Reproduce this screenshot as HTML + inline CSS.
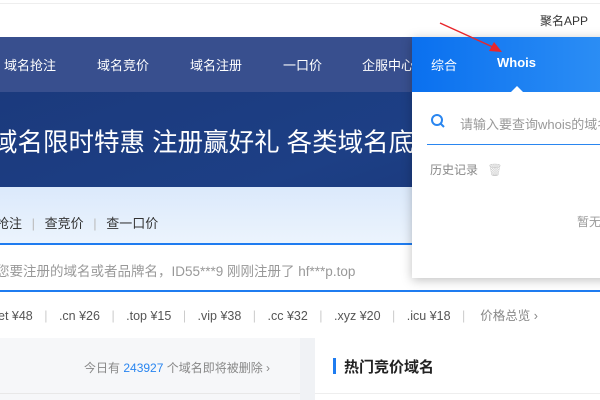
<!DOCTYPE html><html><head><meta charset="utf-8"><style>
*{margin:0;padding:0;box-sizing:border-box}
body{width:600px;height:400px;overflow:hidden;position:relative;background:#fff;font-family:"Liberation Sans","Noto Sans CJK SC",sans-serif;}
.a{position:absolute;white-space:nowrap}
.s{color:#ccc;margin:0 8px}
</style></head><body>
<div class="a" style="left:0;top:3px;width:600px;height:1px;background:#eee"></div>
<div class="a" style="left:540px;top:12px;font-size:12px;color:#333">聚名APP</div>
<div class="a" style="left:0;top:37px;width:600px;height:55px;background:#384f8e"></div>
<div class="a" style="left:4px;top:55px;font-size:13px;color:#fff">域名抢注</div>
<div class="a" style="left:97px;top:55px;font-size:13px;color:#fff">域名竞价</div>
<div class="a" style="left:190px;top:55px;font-size:13px;color:#fff">域名注册</div>
<div class="a" style="left:283px;top:55px;font-size:13px;color:#fff">一口价</div>
<div class="a" style="left:362px;top:55px;font-size:13px;color:#fff">企服中心</div>
<div class="a" style="left:0;top:92px;width:600px;height:95px;background:linear-gradient(160deg,#1b3a7d,#1d3f85 60%,#1a3779)"></div>
<div class="a" style="left:-8px;top:122px;font-size:25.5px;color:#fff">域名限时特惠 注册赢好礼 各类域名底价</div>
<div class="a" style="left:0;top:187px;width:600px;height:57px;background:linear-gradient(#dbe9fb,#ecf4fd)"></div>
<div class="a" style="left:-4px;top:213px;font-size:13px;color:#333">抢注 <span style="color:#bbb;margin:0 6px">|</span> 查竞价 <span style="color:#bbb;margin:0 6px">|</span> 查一口价</div>
<div class="a" style="left:0;top:243px;width:600px;height:49px;background:#fff;border-top:2px solid #1f7cf0;border-bottom:2px solid #1f7cf0"></div>
<div class="a" style="left:-4px;top:260px;font-size:13.5px;color:#999">您要注册的域名或者品牌名，ID55***9 刚刚注册了 hf***p.top</div>
<div class="a" style="left:-2px;top:305px;font-size:12.5px;color:#555">et ¥48 <span class="s">|</span> .cn ¥26 <span class="s">|</span> .top ¥15 <span class="s">|</span> .vip ¥38 <span class="s">|</span> .cc ¥32 <span class="s">|</span> .xyz ¥20 <span class="s">|</span> .icu ¥18 <span class="s">|</span> &nbsp;<span style="color:#888">价格总览 ›</span></div>
<div class="a" style="left:0;top:338px;width:600px;height:62px;background:#f0f2f5"></div>
<div class="a" style="left:0;top:338px;width:300px;height:62px;background:#f6f7f9"></div>
<div class="a" style="left:0;top:393px;width:300px;height:1px;background:#e8e8e8"></div>
<div class="a" style="left:84px;top:359px;font-size:12px;color:#888">今日有 <span style="color:#2a86f0">243927</span> 个域名即将被删除 ›</div>
<div class="a" style="left:315px;top:338px;width:285px;height:62px;background:#fff"></div>
<div class="a" style="left:315px;top:393px;width:285px;height:1px;background:#eee"></div>
<div class="a" style="left:333px;top:358px;width:3px;height:16px;background:#1f7cf0"></div>
<div class="a" style="left:344px;top:356px;font-size:15px;font-weight:bold;color:#222">热门竞价域名</div>
<div class="a" style="left:412px;top:37px;width:200px;height:241px;background:#fff;box-shadow:0 2px 10px rgba(0,0,0,.25)"></div>
<div class="a" style="left:412px;top:37px;width:200px;height:55px;background:linear-gradient(90deg,#0a70ef,#2d8ff5)"></div>
<div class="a" style="left:431px;top:55px;font-size:13px;color:#fff">综合</div>
<div class="a" style="left:497px;top:55px;font-size:13px;font-weight:bold;color:#fff">Whois</div>
<div class="a" style="left:511px;top:86px;width:0;height:0;border-left:6px solid transparent;border-right:6px solid transparent;border-bottom:6px solid #fff"></div>
<svg class="a" style="left:430px;top:113px" width="16" height="16"><circle cx="7" cy="7" r="5" stroke="#2a86f0" stroke-width="2" fill="none"/><line x1="10.5" y1="10.5" x2="14" y2="14" stroke="#2a86f0" stroke-width="2"/></svg>
<div class="a" style="left:460px;top:114px;font-size:13px;color:#999">请输入要查询whois的域名</div>
<div class="a" style="left:427px;top:144px;width:173px;height:1px;background:#2a86f0"></div>
<div class="a" style="left:430px;top:161px;font-size:12px;color:#888">历史记录 <span style="color:#ccc;margin-left:6px">🗑</span></div>
<div class="a" style="left:577px;top:213px;font-size:12px;color:#999">暂无</div>
<svg class="a" style="left:0;top:0" width="600" height="100"><line x1="440" y1="23" x2="495" y2="48" stroke="#e8262b" stroke-width="1.5"/><polygon points="502,52 489,51 494,42" fill="#e8262b"/></svg>
</body></html>
